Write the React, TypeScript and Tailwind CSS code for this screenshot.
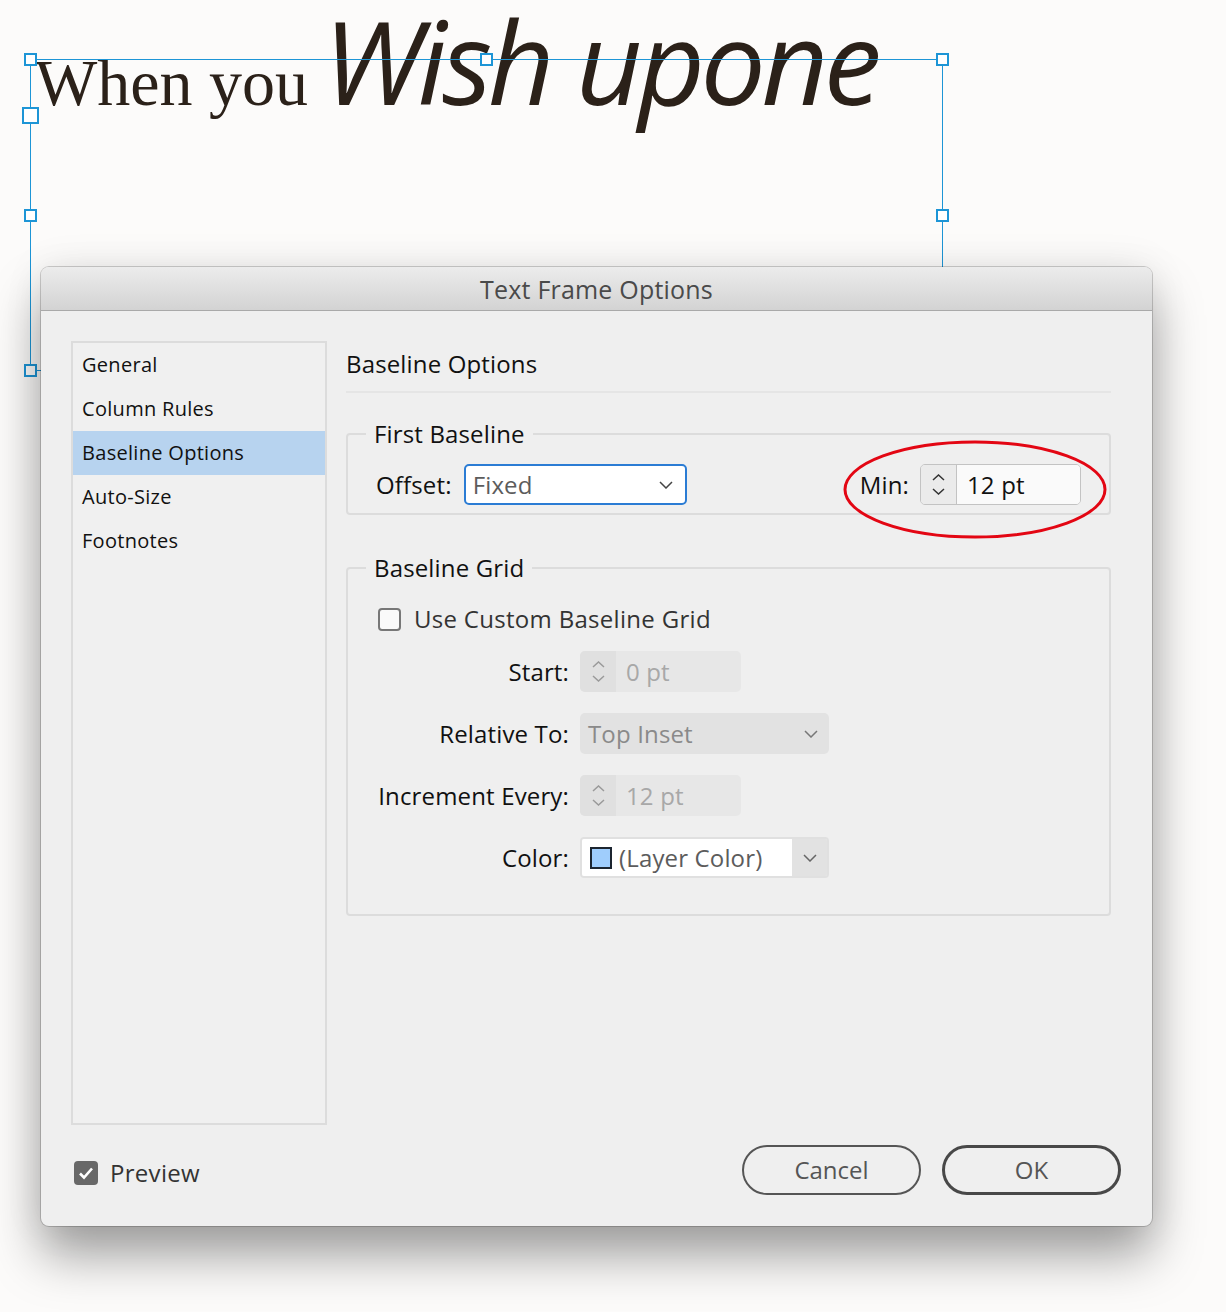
import React from 'react';

const ui = { fontFamily: '"Open Sans", "Noto Sans", sans-serif' };

function Chevron({ className = '' }: { className?: string }) {
  return (
    <svg width="14" height="8" viewBox="0 0 14 8" className={className}>
      <polyline points="1,1 7,7 13,1" fill="none" stroke="currentColor" strokeWidth="1.5" />
    </svg>
  );
}

function SpinArrows({ color }: { color: string }) {
  return (
    <div className="flex flex-col items-center gap-[7px]" style={{ color }}>
      <svg width="13" height="7" viewBox="0 0 13 7">
        <polyline points="1,6 6.5,1 12,6" fill="none" stroke="currentColor" strokeWidth="1.5" />
      </svg>
      <svg width="13" height="7" viewBox="0 0 13 7">
        <polyline points="1,1 6.5,6 12,1" fill="none" stroke="currentColor" strokeWidth="1.5" />
      </svg>
    </div>
  );
}

function Spinner({ value, disabled }: { value: string; disabled?: boolean }) {
  if (disabled) {
    return (
      <div className="flex h-[41px] w-[161px] overflow-hidden rounded-[5px] bg-[#e7e7e7]">
        <div className="flex w-[36px] items-center justify-center bg-[#e0e0e0]">
          <SpinArrows color="#9a9a9a" />
        </div>
        <div className="flex items-center pl-[10px] text-[24px] text-[#a8a8a8]">{value}</div>
      </div>
    );
  }
  return (
    <div className="flex h-[41px] w-[161px] overflow-hidden rounded-[5px] border border-[#c3c3c3]">
      <div className="flex w-[36px] items-center justify-center border-r border-[#c3c3c3] bg-[#ebebeb]">
        <SpinArrows color="#333" />
      </div>
      <div className="flex flex-1 items-center bg-[#fafafa] pl-[10px] text-[24px] text-[#111]">{value}</div>
    </div>
  );
}

function Handle({ x, y, size = 13 }: { x: number; y: number; size?: number }) {
  return (
    <div
      className="absolute border-2 border-[#1d95d6] bg-white"
      style={{ left: x - size / 2, top: y - size / 2, width: size, height: size }}
    />
  );
}

export default function App() {
  const items = ['General', 'Column Rules', 'Baseline Options', 'Auto-Size', 'Footnotes'];

  return (
    <div className="relative h-[1312px] w-[1226px] overflow-hidden bg-[#fcfbfa]" style={ui}>
      {/* canvas text */}
      <div className="h-[267px]">
        <div className="flex items-baseline pl-[35px] pt-[6px] text-[#2b2119]">
          <span className="text-[66px] leading-none" style={{ fontFamily: '"Liberation Serif", serif' }}>
            When you
          </span>
          <span
            className="ml-[15px] text-[116px] font-medium italic leading-[0.94] tracking-[-4.5px]"
            style={{ fontFamily: '"Open Sans", sans-serif' }}
          >
            Wish upone
          </span>
        </div>
      </div>

      {/* text frame */}
      <div className="absolute left-[30px] top-[59px] h-[312px] w-[913px] border border-[#1d95d6]" />
      <Handle x={30.5} y={59.5} />
      <Handle x={486.5} y={59.5} />
      <Handle x={942.5} y={59.5} />
      <Handle x={30.5} y={115} size={17} />
      <Handle x={30.5} y={215} />
      <Handle x={942.5} y={215} />
      <Handle x={30.5} y={370} />

      {/* dialog */}
      <div className="relative z-10 ml-[41px] h-[959px] w-[1111px] rounded-[8px] bg-[#efefef] shadow-[0_0_0_1px_rgba(0,0,0,0.18),0_30px_50px_rgba(0,0,0,0.36),0_0_40px_rgba(0,0,0,0.08)]">
        <div className="flex h-[44px] items-center justify-center rounded-t-[8px] border-b border-[#a9a9a9] bg-gradient-to-b from-[#ececec] to-[#d3d3d3] pt-[3px] text-[25px] tracking-[0.2px] text-[#4a4a4a]">
          Text Frame Options
        </div>

        <div className="flex flex-col px-[30px] pt-[30px]">
          <div className="flex h-[784px]">
            {/* nav list */}
            <div className="w-[256px] border-2 border-[#dcdcdc] bg-[#f0f0f0]">
              {items.map((item) => (
                <div
                  key={item}
                  className={`flex h-[44px] items-center pl-[9px] text-[20px] tracking-[0.3px] text-[#111] ${
                    item === 'Baseline Options' ? 'bg-[#b7d3ef]' : ''
                  }`}
                >
                  {item}
                </div>
              ))}
            </div>

            {/* panel */}
            <div className="ml-[19px] w-[765px] tracking-[0.15px]">
              <div className="text-[24px] leading-[46px] text-[#111]">Baseline Options</div>
              <div className="mt-[4px] h-[2px] bg-[#e5e5e5]" />

              <fieldset className="mt-[25px] rounded-[4px] border-2 border-[#dcdcdc] pb-[8px] pl-[28px] pr-[28px]">
                <legend className="ml-[-10px] px-[8px] text-[24px] leading-[32px] text-[#111]">First Baseline</legend>
                <div className="mt-[14px] flex items-center justify-between">
                  <div className="flex items-center">
                    <span className="text-[24px] text-[#111]">Offset:</span>
                    <div className="ml-[12px] flex h-[41px] w-[223px] items-center justify-between rounded-[5px] border-2 border-[#2b7cd4] bg-white pl-[7px] pr-[12px]">
                      <span className="text-[24px] text-[#5c5c5c]">Fixed</span>
                      <Chevron className="text-[#444]" />
                    </div>
                  </div>
                  <div className="flex items-center">
                    <span className="mr-[11px] text-[24px] text-[#111]">Min:</span>
                    <Spinner value="12 pt" />
                  </div>
                </div>
              </fieldset>

              <fieldset className="mt-[37px] rounded-[4px] border-2 border-[#dcdcdc] pb-[36px] pl-[28px] pr-[28px]">
                <legend className="ml-[-10px] px-[8px] text-[24px] leading-[32px] text-[#111]">Baseline Grid</legend>
                <div className="mt-[17px] flex h-[36px] items-center pl-[2px]">
                  <div className="h-[23px] w-[23px] rounded-[4px] border-2 border-[#777] bg-[#fafafa]" />
                  <span className="ml-[13px] text-[24px] tracking-[0.3px] text-[#333]">Use Custom Baseline Grid</span>
                </div>

                <div className="mt-[14px] grid grid-cols-[193px_1fr] items-center gap-x-[11px] gap-y-[21px]">
                  <span className="whitespace-nowrap text-right text-[24px] text-[#111]">Start:</span>
                  <Spinner value="0 pt" disabled />

                  <span className="whitespace-nowrap text-right text-[24px] text-[#111]">Relative To:</span>
                  <div className="flex h-[41px] w-[249px] items-center justify-between rounded-[5px] bg-[#e2e2e2] pl-[8px] pr-[11px]">
                    <span className="text-[24px] text-[#8a8a8a]">Top Inset</span>
                    <Chevron className="text-[#777]" />
                  </div>

                  <span className="whitespace-nowrap text-right text-[24px] text-[#111]">Increment Every:</span>
                  <Spinner value="12 pt" disabled />

                  <span className="whitespace-nowrap text-right text-[24px] text-[#111]">Color:</span>
                  <div className="flex h-[41px] w-[249px] overflow-hidden rounded-[4px] border-2 border-[#e0e0e0]">
                    <div className="flex w-[210px] items-center bg-white pl-[8px]">
                      <div className="h-[22px] w-[22px] border-2 border-[#1c2530] bg-[#9fcdfc]" />
                      <span className="ml-[7px] text-[24px] text-[#5c5c5c]">(Layer Color)</span>
                    </div>
                    <div className="flex flex-1 items-center justify-center bg-[#e2e2e2]">
                      <Chevron className="text-[#666]" />
                    </div>
                  </div>
                </div>
              </fieldset>
            </div>
          </div>

          {/* footer */}
          <div className="mt-[20px] flex h-[50px] items-center justify-between pr-[1px]">
            <div className="mt-[5px] flex items-center pl-[3px]">
              <div className="flex h-[24px] w-[24px] items-center justify-center rounded-[4px] bg-[#686868]">
                <svg width="16" height="14" viewBox="0 0 16 14">
                  <polyline points="2,7.5 6,11.5 14,2.5" fill="none" stroke="white" strokeWidth="2.6" />
                </svg>
              </div>
              <span className="ml-[12px] text-[24px] tracking-[0.3px] text-[#333]">Preview</span>
            </div>
            <div className="flex gap-[21px]">
              <div className="flex h-[50px] w-[179px] items-center justify-center rounded-full border-2 border-[#555] text-[24px] text-[#555]">
                Cancel
              </div>
              <div className="flex h-[50px] w-[179px] items-center justify-center rounded-full border-[3px] border-[#484848] text-[24px] text-[#555]">
                OK
              </div>
            </div>
          </div>
        </div>

        {/* annotation */}
        <svg className="pointer-events-none absolute left-[802px] top-[173px]" width="264" height="99" viewBox="0 0 264 99">
          <ellipse cx="132" cy="49.5" rx="130" ry="47.5" fill="none" stroke="#e30613" strokeWidth="3" />
        </svg>
      </div>
    </div>
  );
}
